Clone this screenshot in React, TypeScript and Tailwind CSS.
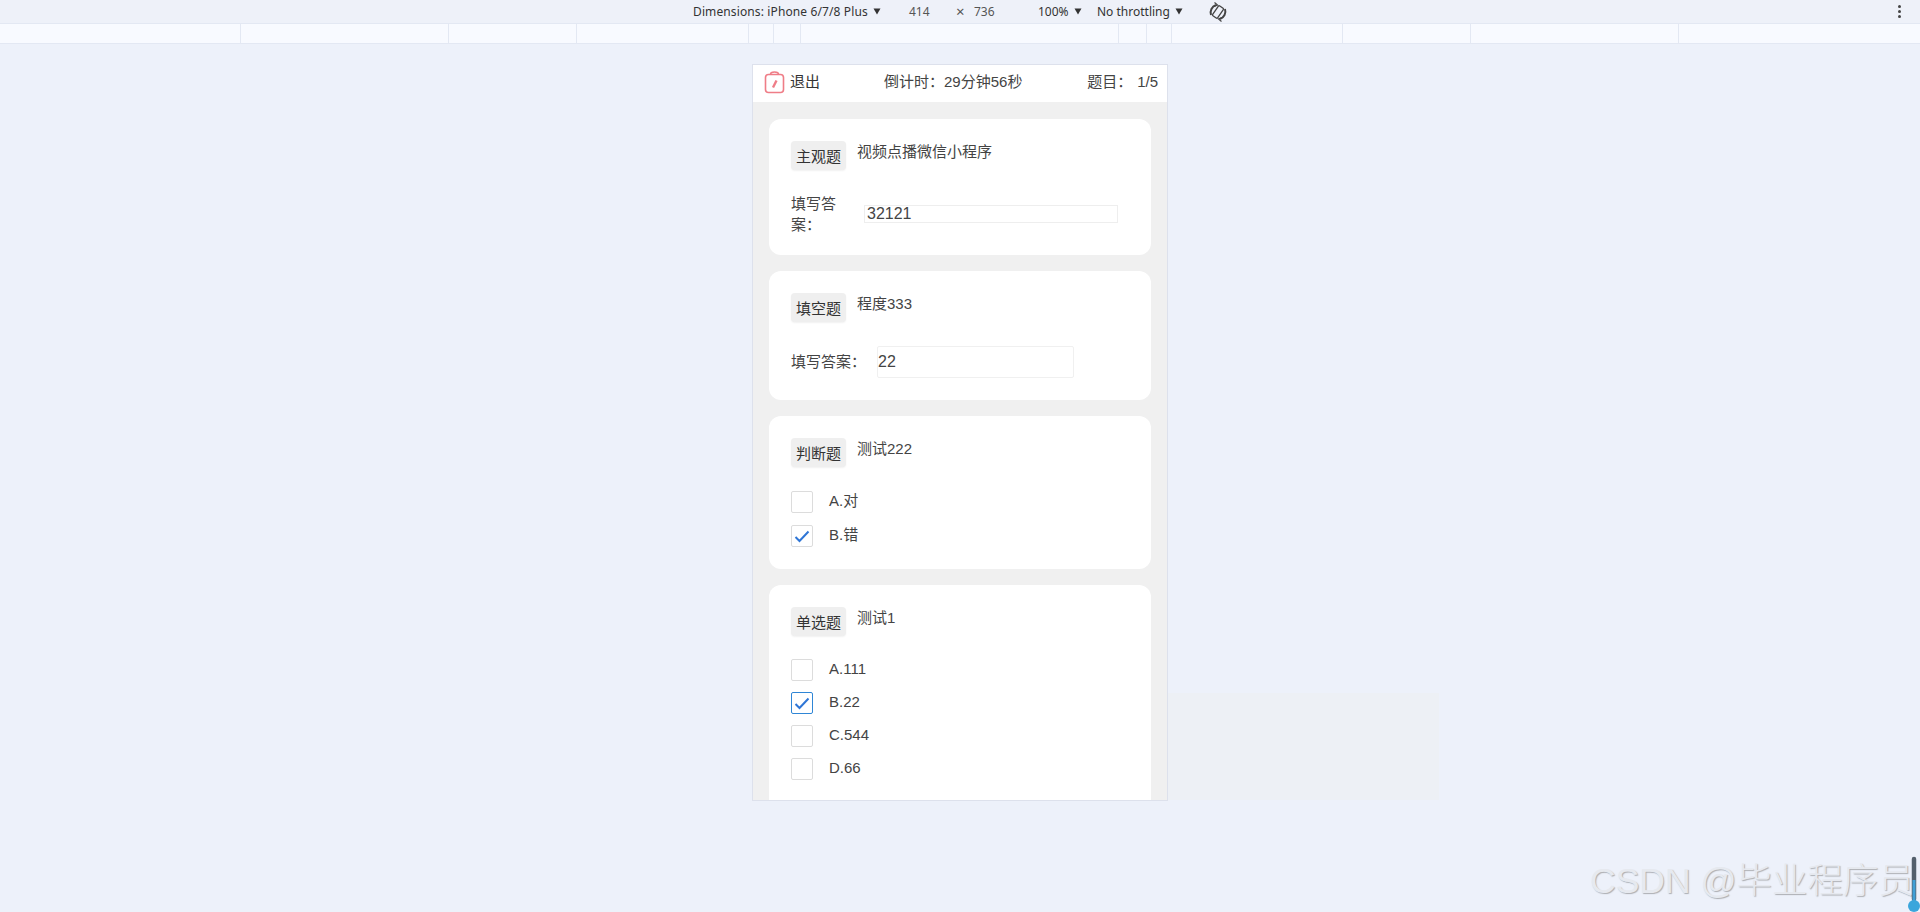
import { ReactNode } from "react";

const font = "[font-family:'Liberation_Sans','Noto_Sans_CJK_SC',sans-serif]";

const ticks = [241, 208, 128, 172, 25, 27, 318, 28, 25, 171, 128, 208];

function Caret() {
  return (
    <svg width="8" height="7" viewBox="0 0 8 7" className="shrink-0">
      <path d="M0.5 0.5h7L4 6.5z" fill="#333" />
    </svg>
  );
}

function Toolbar() {
  return (
    <div className="relative flex h-[23px] shrink-0 items-center bg-[#eef1f9] text-[12px] text-[#333] [font-family:'Noto_Sans',sans-serif]">
      <span className="ml-[693px] flex w-[191px] items-center gap-[5px] whitespace-nowrap tracking-[0.12px]">
        Dimensions: iPhone 6/7/8 Plus <Caret />
      </span>
      <span className="ml-[25px] w-[23px] text-[#555]">414</span>
      <span className="ml-[24px] w-[16px] text-[15px] leading-none text-[#555]">×</span>
      <span className="ml-[2px] w-[30px] text-[#555]">736</span>
      <span className="ml-[34px] flex w-[47px] items-center gap-[5px]">
        100% <Caret />
      </span>
      <span className="ml-[12px] flex w-[100px] items-center gap-[5px] whitespace-nowrap">
        No throttling <Caret />
      </span>
      <svg width="20" height="22" viewBox="0 0 20 22" className="ml-[11px]" fill="none" stroke="#444">
        <rect x="7" y="5" width="6" height="12" rx="1" strokeWidth="1.3" transform="rotate(35 10 11)" />
        <path d="M3 14a8 8 0 0 1 5-10M17 8a8 8 0 0 1-5 10" strokeWidth="2" />
        <path d="M6.5 1.5l3 2.5-3.5 1.5M13.5 20.5l-3-2.5 3.5-1.5" strokeWidth="1.2" />
      </svg>
      <span className="absolute right-[19px] top-[5px] flex flex-col gap-[2px]">
        <i className="block h-[3px] w-[3px] rounded-full bg-[#444]" />
        <i className="block h-[3px] w-[3px] rounded-full bg-[#444]" />
        <i className="block h-[3px] w-[3px] rounded-full bg-[#444]" />
      </span>
    </div>
  );
}

function Ruler() {
  return (
    <div className="flex h-[21px] shrink-0 border-y border-[#e3e8f3] bg-[#f8faff]">
      {ticks.map((w, i) => (
        <div key={i} style={{ width: w }} className="border-r border-[#e3e8f3]" />
      ))}
    </div>
  );
}

function Tag({ type, title }: { type: string; title: string }) {
  return (
    <div className="flex items-start">
      <span className="flex h-[29px] w-[55px] items-end justify-center rounded-[4px] bg-[#efefef] pb-[3px] text-[15px] leading-[21px] text-[#333] shadow-[0_1px_2px_rgba(0,0,0,0.06)]">
        {type}
      </span>
      <span className="ml-[11px] text-[15px] leading-[21px] text-[#444]">{title}</span>
    </div>
  );
}

function Card({ children, className }: { children: ReactNode; className: string }) {
  return <div className={`mx-4 shrink-0 rounded-[12px] bg-white pl-[22px] pt-[22px] ${className}`}>{children}</div>;
}

function Option({ label, state }: { label: string; state?: "checked" | "focus" }) {
  return (
    <div className="flex h-[22px] items-center">
      <span
        className={`flex h-[22px] w-[22px] items-center justify-center rounded-[2px] border ${
          state === "focus" ? "border-[#2f86d6]" : "border-[#dcdcdc]"
        }`}
      >
        {state && (
          <svg width="16" height="13" viewBox="0 0 16 13" fill="none">
            <path d="M1.5 7l4 4L14.5 1.5" stroke="#2f76d6" strokeWidth="2" />
          </svg>
        )}
      </span>
      <span className="ml-[16px] -translate-y-px text-[15px] leading-[22px] text-[#444]">{label}</span>
    </div>
  );
}

function Phone() {
  return (
    <div className="relative z-10 mx-auto mt-[20px] flex h-[737px] w-[416px] flex-col overflow-hidden border border-[#dde1ec] bg-[#f0f0f0]">
      <div className="flex h-[37px] shrink-0 items-center bg-white pb-[2px] pl-[11px] pr-[9px] text-[15px] text-[#444]">
        <svg width="21" height="23" viewBox="0 0 21 23" fill="none" stroke="#ef7d87" strokeWidth="1.6" className="shrink-0">
          <rect x="1.5" y="3.5" width="18" height="18" rx="3" />
          <path d="M6.5 3.5C6.5 1.5 7.5 1 10.5 1s4 .5 4 2.5" />
          <path d="M12.5 9.5l-3.5 7" strokeWidth="2.4" />
        </svg>
        <span className="ml-[5px] text-[#333]">退出</span>
        <span className="ml-[64px]">倒计时：29分钟56秒</span>
        <span className="ml-auto">题目：</span>
        <span className="ml-[5px]">1/5</span>
      </div>

      <div className="flex flex-col gap-4 pt-[17px]">
        <Card className="h-[136px]">
          <Tag type="主观题" title="视频点播微信小程序" />
          <div className="mt-[23px] flex items-center">
            <span className="w-[46px] text-[15px] leading-[21px] text-[#444]">填写答案：</span>
            <span className="ml-[27px] flex h-[18px] w-[254px] items-center border border-[#eeeeee] pl-[2px] text-[16px] text-[#444]">
              32121
            </span>
          </div>
        </Card>

        <Card className="h-[129px]">
          <Tag type="填空题" title="程度333" />
          <div className="mt-[24px] flex items-center">
            <span className="w-[86px] whitespace-nowrap text-[15px] text-[#444]">填写答案：</span>
            <span className="flex h-[32px] w-[197px] items-center rounded-[2px] border border-[#f0f0f0] text-[16px] text-[#444]">
              22
            </span>
          </div>
        </Card>

        <Card className="h-[153px]">
          <Tag type="判断题" title="测试222" />
          <div className="mt-[24px] flex flex-col gap-3">
            <Option label="A.对" />
            <Option label="B.错" state="checked" />
          </div>
        </Card>

        <Card className="h-[240px]">
          <Tag type="单选题" title="测试1" />
          <div className="mt-[23px] flex flex-col gap-[11px]">
            <Option label="A.111" />
            <Option label="B.22" state="focus" />
            <Option label="C.544" />
            <Option label="D.66" />
          </div>
        </Card>
      </div>
    </div>
  );
}

export default function App() {
  return (
    <div className={`relative flex h-screen flex-col overflow-hidden bg-[#edf1fa] ${font}`}>
      <Toolbar />
      <Ruler />
      <Phone />
      {/* faint patch to the right of the phone */}
      <div className="absolute left-[1168px] top-[693px] h-[107px] w-[271px] bg-[#edf0f5]" />
      <div className="absolute bottom-[7px] right-[6px] whitespace-nowrap text-[35.5px] font-light leading-[48px] text-[#e6e9ef] [text-shadow:1px_1px_1px_rgba(110,110,110,0.5)]">
        CSDN @毕业程序员
      </div>
      <svg width="12" height="56" viewBox="0 0 12 56" className="absolute bottom-0 right-0">
        <path d="M6 3v40" stroke="#54606c" strokeWidth="4.5" strokeLinecap="round" />
        <path d="M6 24v22" stroke="#3f9fd6" strokeWidth="3" />
        <circle cx="6" cy="50" r="6" fill="#3ba6dc" />
      </svg>
    </div>
  );
}
